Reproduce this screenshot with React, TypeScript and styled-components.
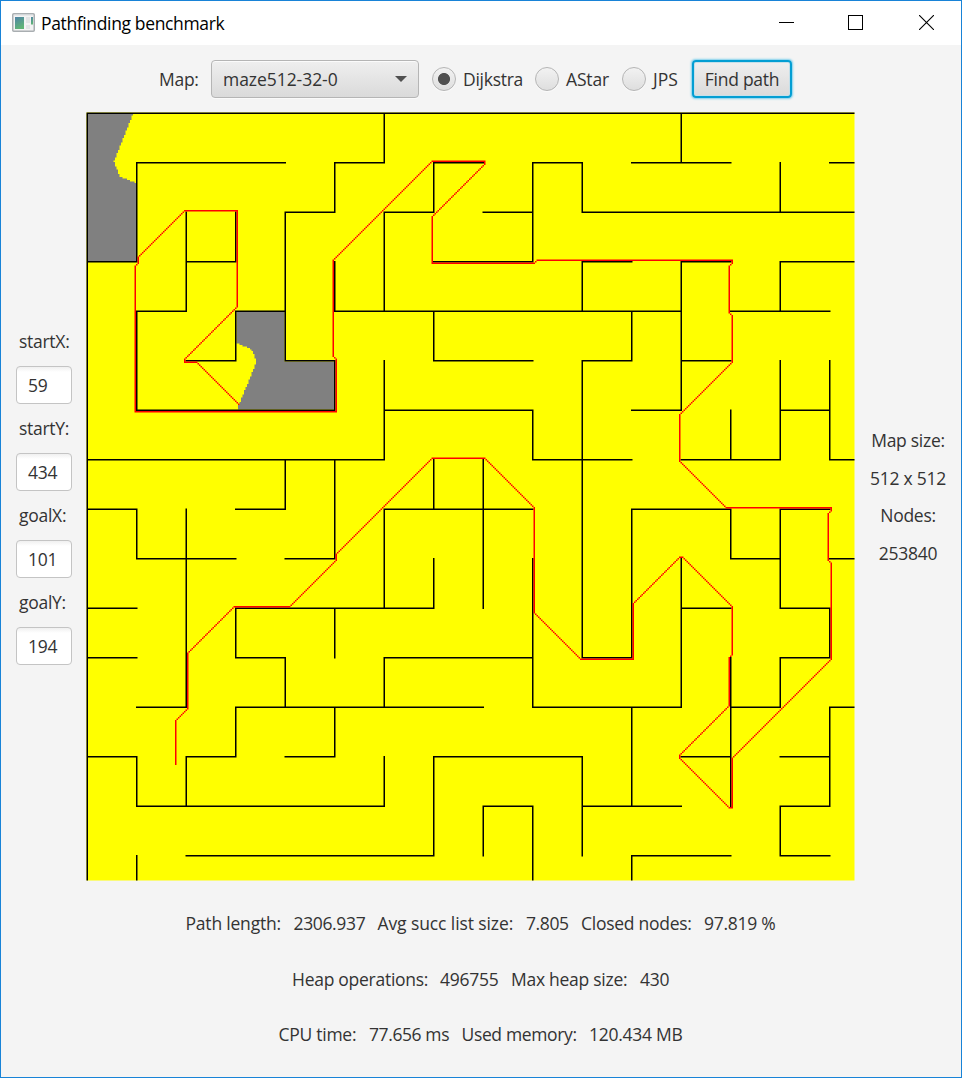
import React from "react";
import styled, { createGlobalStyle } from "styled-components";

const GlobalStyle = createGlobalStyle`
  * { box-sizing: border-box; }
  body { margin: 0; }
`;

const Window = styled.div`
  display: flex;
  flex-direction: column;
  width: 962px;
  height: 1078px;
  border: 1px solid #1883d7;
  background: #f4f4f4;
  color: #333;
  font-family: "Open Sans", "Noto Sans", sans-serif;
  font-size: 17.5px;
  letter-spacing: -0.27px;
  line-height: 24px;
  overflow: hidden;
`;

const TitleBar = styled.header`
  display: flex;
  align-items: center;
  height: 44px;
  padding: 0 27px 0 11px;
  background: #fff;
  color: #000;
`;

const Title = styled.h1`
  flex: 1;
  margin: 0 0 0 6px;
  font-size: 17.5px;
  font-weight: 400;
  letter-spacing: -0.36px;
`;

const WindowControls = styled.div`
  display: flex;
  margin-bottom: 1px;
`;

const ControlIcon = styled.svg<{ $before?: number }>`
  display: block;
  margin-left: ${(p) => p.$before ?? 0}px;
`;

const Toolbar = styled.div`
  display: flex;
  align-items: center;
  height: 38px;
  margin: 15px 0 14px 158px;
`;

const Text = styled.span<{ $w?: number; $ls?: number }>`
  flex: none;
  width: ${(p) => (p.$w ? `${p.$w}px` : "auto")};
  letter-spacing: ${(p) => p.$ls ?? -0.27}px;
  white-space: nowrap;
`;

const ComboBox = styled.div`
  display: flex;
  align-items: center;
  justify-content: space-between;
  width: 208px;
  height: 38px;
  margin: 0 13px 0 12px;
  padding: 0 11px;
  border: 1.5px solid #b5b5b5;
  border-radius: 4px;
  background: linear-gradient(#efefef, #dadada);
  box-shadow: inset 0 1px 0 #fbfbfb, 0 1px 0 #fafafa;
`;

const Arrow = styled.i`
  border: 6px solid transparent;
  border-top-color: #505050;
  border-bottom: 0;
`;

const Radio = styled.span<{ $on?: boolean }>`
  flex: none;
  width: 24px;
  height: 24px;
  margin-right: 7px;
  border: 1.5px solid #b5b5b5;
  border-radius: 50%;
  background: ${(p) =>
    p.$on
      ? "radial-gradient(circle, #505050 5.6px, transparent 6.4px), linear-gradient(#f2f2f2, #dedede)"
      : "linear-gradient(#f2f2f2, #dedede)"};
  box-shadow: 0 1px 0 #fafafa;
`;

const Button = styled.button`
  flex: none;
  width: 100px;
  height: 38px;
  padding: 0;
  border: 2px solid #039ed3;
  border-radius: 4px;
  background: linear-gradient(#efefef, #dadada);
  box-shadow: 0 0 2px 0.5px #7fd0ec, inset 0 0 0 1px #c5e0ea;
  color: #333;
  font: inherit;
  letter-spacing: -0.27px;
`;

const Body = styled.main`
  display: flex;
  align-items: center;
  height: 769px;
`;

const Inputs = styled.div`
  display: flex;
  flex-direction: column;
  gap: 12.5px;
  width: 85px;
  padding: 1px 14px 0 15px;
`;

const FieldLabel = styled.label`
  padding-left: 3px;
  white-space: nowrap;
`;

const Field = styled.div`
  width: 56px;
  height: 38px;
  padding: 0 11px;
  border: 1.5px solid #c4c4c4;
  border-radius: 4px;
  background: linear-gradient(#f0f0f0, #fff 5px);
  line-height: 36px;
`;

const Maze = styled.svg`
  display: block;
  flex: none;
`;

const Info = styled.div`
  display: flex;
  flex: 1;
  flex-direction: column;
  align-items: center;
  gap: 13.5px;
  white-space: nowrap;
`;

const Stats = styled.footer`
  display: flex;
  flex-direction: column;
  gap: 31.5px;
  padding-top: 30px;
`;

const StatRow = styled.div<{ $left: number }>`
  display: flex;
  gap: 12px;
  padding-left: ${(p) => p.$left}px;
`;

/* Walls lie on a 33-cell grid; "a-b" spans run between grid lines, E is the map edge. */
const PITCH = 33;
const SIZE = 512;

const horizontal = [
  "0-E", "1-4 5-6 7-8 9-10 11-13 15-E", "4-5 6-7 8-9 10-E",
  "0-1 2-3 7-9 10-11 12-13 14-E", "1-2 3-4 5-12 13-15", "2-3 4-5 7-9 10-11 12-13",
  "1-5 6-9 11-12 14-15", "0-6 9-11 12-14 15-E", "0-1 3-4 6-9 11-13 14-15",
  "1-3 4-5 13-14 15-E", "0-1 3-7 12-13 14-15", "0-1 3-4 6-9 10-11 14-15",
  "1-2 3-8 9-12 13-14 15-E", "0-1 2-3 4-5 7-10 12-13 14-15", "1-6 8-9 10-12 14-15",
  "2-7 11-13 14-15",
];

const vertical = [
  "0-E", "1-3 4-6 8-9 13-14 15-E", "2-4 8-12 13-14", "2-3 4-5 10-11 12-13",
  "2-5 7-8 11-12", "1-2 3-4 5-6 7-9 10-11 12-13", "0-1 2-4 5-7 8-10 11-12 13-14",
  "1-2 4-5 7-8 9-10 13-15", "7-10 14-15", "1-3 6-7 9-12 14-E",
  "1-2 3-4 5-11 13-15", "4-5 8-11 12-14 15-E", "0-1 3-6 9-12", "6-7 8-9 11-14",
  "1-2 3-4 5-7 8-10 11-12 14-15", "5-7 10-11 12-14",
];

const rect = (x: number, y: number, w: number, h: number) =>
  `M${x} ${y}h${w}v${h}h${-w}z`;

const spans = (row: string) =>
  row.split(" ").map((s) => {
    const [a, b] = s.split("-");
    const from = Number(a) * PITCH;
    return [from, (b === "E" ? SIZE : Number(b) * PITCH + 1) - from];
  });

const walls = [
  ...horizontal.flatMap((r, i) => spans(r).map(([s, l]) => rect(s, i * PITCH, l, 1))),
  ...vertical.flatMap((r, i) => spans(r).map(([s, l]) => rect(i * PITCH, s, 1, l))),
].join("");

const route: [number, number][] = [
  [59, 434], [59, 405], [67, 397], [67, 360], [98, 329], [135, 329], [166, 298],
  [166, 294], [230, 230], [265, 230], [298, 263], [298, 333], [329, 364],
  [364, 364], [364, 327], [395, 296], [397, 296], [430, 329], [430, 361],
  [428, 363], [428, 395], [395, 428], [395, 430], [428, 463], [430, 463],
  [430, 430], [496, 364], [496, 300], [494, 298], [494, 267], [496, 265],
  [496, 263], [426, 263], [395, 232], [395, 201], [430, 166], [430, 135],
  [428, 133], [428, 102], [430, 100], [430, 98], [300, 98], [298, 100],
  [230, 100], [230, 69], [265, 34], [265, 32], [230, 32], [164, 98],
  [164, 162], [166, 164], [166, 199], [32, 199], [32, 102], [34, 100],
  [34, 96], [65, 65], [100, 65], [100, 129], [65, 164], [65, 166], [73, 166],
  [101, 194],
];

const path = route
  .slice(1)
  .map(([x2, y2], i) => {
    const [x1, y1] = route[i];
    if (x1 === x2) return rect(x1, Math.min(y1, y2), 1, Math.abs(y2 - y1) + 1);
    if (y1 === y2) return rect(Math.min(x1, x2), y1, Math.abs(x2 - x1) + 1, 1);
    const n = Math.abs(x2 - x1);
    return Array.from({ length: n + 1 }, (_, k) =>
      rect(x1 + Math.sign(x2 - x1) * k, y1 + Math.sign(y2 - y1) * k, 1, 1)
    ).join("");
  })
  .join("");

/* Boundary column of an unexplored area at a given row, linear between the points. */
const edgeAt = (pts: [number, number][], y: number) => {
  const i = Math.max(1, pts.findIndex(([, py]) => py >= y));
  const [x1, y1] = pts[i - 1];
  const [x2, y2] = pts[i];
  return Math.round(x1 + ((x2 - x1) * (y - y1)) / (y2 - y1));
};

const edgeA: [number, number][] = [[31.3, 0.5], [18.3, 32.5], [22, 42.5], [33, 47], [33, 100]];
const edgeB: [number, number][] = [[99, 153.5], [110, 157.8], [113.4, 166], [100, 199]];

const unexplored = [
  ...Array.from({ length: 98 }, (_, k) => rect(1, k + 1, edgeAt(edgeA, k + 1.5) - 1, 1)),
  rect(100, 133, 32, 21),
  ...Array.from({ length: 44 }, (_, k) => {
    const y = 154 + k;
    const x = edgeAt(edgeB, y + 0.5);
    return rect(x, y, (y > 165 ? 165 : 132) - x, 1);
  }),
].join("");

const fields = [["startX:", "59"], ["startY:", "434"], ["goalX:", "101"], ["goalY:", "194"]];

export default function App() {
  return (
    <Window>
      <GlobalStyle />
      <TitleBar>
        <svg width="23" height="20" viewBox="0 0 23 20">
          <defs>
            <linearGradient id="screen" x1="0" y1="0" x2="0.4" y2="1">
              <stop offset="0" stopColor="#4f83a8" />
              <stop offset="1" stopColor="#5fb476" />
            </linearGradient>
          </defs>
          <rect x="0.75" y="0.75" width="21.5" height="17.5" rx="1" fill="#f3f3f3" stroke="#a9aeb1" strokeWidth="1.5" />
          <path d="M2 2h19" stroke="#d9dde0" />
          <rect x="3" y="4" width="9" height="12" fill="url(#screen)" />
          <path d="M14 4h4v6h-4zM14 12h4v4h-4z" fill="#e2e4e5" />
          <rect x="19" y="4" width="2" height="7.5" fill="url(#screen)" />
        </svg>
        <Title>Pathfinding benchmark</Title>
        <WindowControls>
          <ControlIcon width="15" height="15" shapeRendering="crispEdges"><path d="M0 7.5h15" stroke="#000" /></ControlIcon>
          <ControlIcon $before={54} width="15" height="15" shapeRendering="crispEdges"><rect x=".5" y=".5" width="14" height="14" fill="none" stroke="#000" /></ControlIcon>
          <ControlIcon $before={56} width="15" height="15"><path d="M0 0l15 15M15 0L0 15" stroke="#000" strokeWidth="1.1" /></ControlIcon>
        </WindowControls>
      </TitleBar>

      <Toolbar>
        <Text $w={40}>Map:</Text>
        <ComboBox>
          <Text $ls={-0.05}>maze512-32-0</Text>
          <Arrow />
        </ComboBox>
        <Radio $on />
        <Text $w={72}>Dijkstra</Text>
        <Radio />
        <Text $w={56} $ls={-0.15}>AStar</Text>
        <Radio />
        <Text $w={39} $ls={0}>JPS</Text>
        <Button>Find path</Button>
      </Toolbar>

      <Body>
        <Inputs>
          {fields.map(([name, value]) => (
            <React.Fragment key={name}>
              <FieldLabel>{name}</FieldLabel>
              <Field>{value}</Field>
            </React.Fragment>
          ))}
        </Inputs>
        <Maze width="769" height="769" viewBox="-0.33333 -0.33333 512.66667 512.66667">
          <rect width="512" height="512" fill="#ff0" />
          <path d={unexplored} fill="#808080" />
          <path d={walls} fill="#000" />
          <path d={path} fill="#f00" />
        </Maze>
        <Info>
          <Text>Map size:</Text>
          <Text>512 x 512</Text>
          <Text>Nodes:</Text>
          <Text>253840</Text>
        </Info>
      </Body>

      <Stats>
        <StatRow $left={184.5}>
          <Text $w={96} $ls={-0.2}>Path length:</Text>
          <Text $w={72} $ls={-0.35}>2306.937</Text>
          <Text $w={136.5} $ls={-0.1}>Avg succ list size:</Text>
          <Text $w={43} $ls={-0.4}>7.805</Text>
          <Text $w={111}>Closed nodes:</Text>
          <Text>97.819 %</Text>
        </StatRow>
        <StatRow $left={291}>
          <Text $w={136}>Heap operations:</Text>
          <Text $w={59}>496755</Text>
          <Text $w={117}>Max heap size:</Text>
          <Text>430</Text>
        </StatRow>
        <StatRow $left={277.5}>
          <Text $w={78.5}>CPU time:</Text>
          <Text $w={80.5} $ls={-0.4}>77.656 ms</Text>
          <Text $w={115.5} $ls={-0.35}>Used memory:</Text>
          <Text>120.434 MB</Text>
        </StatRow>
      </Stats>
    </Window>
  );
}
